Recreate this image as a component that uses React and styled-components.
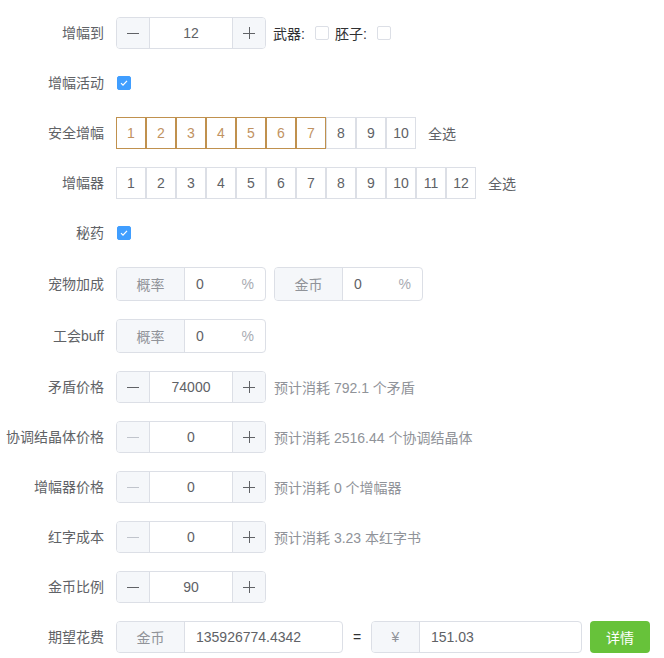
import React from 'react';
import styled, { createGlobalStyle } from 'styled-components';

const GlobalStyle = createGlobalStyle`
  body {
    margin: 0;
    background: #fff;
    font-family: "Liberation Sans", "Noto Sans CJK SC", sans-serif;
    font-size: 14px;
    color: #606266;
  }
`;

const Form = styled.div`
  padding-top: 17px;
  display: flex;
  flex-direction: column;
`;

const Row = styled.div`
  display: flex;
  align-items: center;
  margin-bottom: 18px;
  min-height: ${p => p.h || 32}px;
`;

const Label = styled.div`
  width: 116px;
  flex-shrink: 0;
  box-sizing: border-box;
  padding-right: 12px;
  text-align: right;
  white-space: nowrap;
  color: #606266;
  font-size: 14px;
  line-height: 32px;
`;

const Content = styled.div`
  display: flex;
  align-items: center;
`;

const NumWrap = styled.div`
  display: flex;
  width: 150px;
  height: 32px;
  box-sizing: border-box;
  border: 1px solid #dcdfe6;
  border-radius: 4px;
  overflow: hidden;
`;

const StepBtn = styled.div`
  width: 32px;
  flex-shrink: 0;
  background: #f5f7fa;
  display: flex;
  align-items: center;
  justify-content: center;
  color: ${p => (p.disabled ? '#c0c4cc' : '#606266')};
  border-right: ${p => (p.side === 'left' ? '1px solid #dcdfe6' : 'none')};
  border-left: ${p => (p.side === 'right' ? '1px solid #dcdfe6' : 'none')};
`;

const NumValue = styled.div`
  flex: 1;
  text-align: center;
  line-height: 30px;
  color: #606266;
`;

const Minus = () => (
  <svg width="14" height="14" viewBox="0 0 14 14">
    <path d="M1 7.5h12" stroke="currentColor" strokeWidth="1" />
  </svg>
);

const Plus = () => (
  <svg width="14" height="14" viewBox="0 0 14 14">
    <path d="M1 7.5h12M7.5 1v12" stroke="currentColor" strokeWidth="1" />
  </svg>
);

const NumberInput = ({ value, minDisabled }) => (
  <NumWrap>
    <StepBtn side="left" disabled={minDisabled}><Minus /></StepBtn>
    <NumValue>{value}</NumValue>
    <StepBtn side="right"><Plus /></StepBtn>
  </NumWrap>
);

const Check = styled.span`
  display: inline-flex;
  align-items: center;
  justify-content: center;
  width: 14px;
  height: 14px;
  box-sizing: border-box;
  border-radius: 2px;
  border: 1px solid ${p => (p.checked ? '#409eff' : '#dcdfe6')};
  background: ${p => (p.checked ? '#409eff' : '#fff')};
  margin-left: ${p => p.ml || 0}px;
`;

const Checkbox = ({ checked, ml }) => (
  <Check checked={checked} ml={ml}>
    {checked && (
      <svg width="10" height="10" viewBox="0 0 10 10">
        <path d="M2 5.2l2 2 4-4.4" fill="none" stroke="#fff" strokeWidth="1.2" />
      </svg>
    )}
  </Check>
);

const InlineLabel = styled.span`
  color: #303133;
  margin-left: ${p => p.ml || 0}px;
  margin-right: 10px;
`;

const Boxes = styled.div`
  display: flex;
`;

const NumBox = styled.div`
  width: 30px;
  height: 32px;
  box-sizing: border-box;
  border: 1px solid ${p => (p.on ? '#c0914e' : '#dcdfe6')};
  color: ${p => (p.on ? '#c19261' : '#606266')};
  display: flex;
  align-items: center;
  justify-content: center;
`;

const SelectAll = styled.span`
  margin-left: 12px;
  color: #606266;
`;

const Group = styled.div`
  display: flex;
  width: ${p => p.w}px;
  height: ${p => p.h || 34}px;
  box-sizing: border-box;
  border: 1px solid #dcdfe6;
  border-radius: 4px;
  overflow: hidden;
  margin-left: ${p => p.ml || 0}px;
`;

const Prepend = styled.div`
  width: ${p => p.w}px;
  flex-shrink: 0;
  box-sizing: border-box;
  background: #f5f7fa;
  border-right: 1px solid #dcdfe6;
  color: #909399;
  display: flex;
  align-items: center;
  justify-content: center;
`;

const GroupInput = styled.div`
  flex: 1;
  display: flex;
  align-items: center;
  padding: 0 11px;
  color: #606266;
`;

const Suffix = styled.span`
  margin-left: auto;
  color: #a8abb2;
`;

const Hint = styled.span`
  margin-left: 8px;
  color: #909399;
`;

const Equals = styled.span`
  width: 28px;
  text-align: center;
  color: #303133;
`;

const DetailBtn = styled.button`
  margin-left: 8px;
  width: 60px;
  height: 32px;
  border: none;
  border-radius: 4px;
  background: #67c23a;
  color: #fff;
  font: inherit;
  font-size: 14px;
`;

const safeOn = [1, 2, 3, 4, 5, 6, 7];

export default function App() {
  return (
    <>
      <GlobalStyle />
      <Form>
        <Row>
          <Label>增幅到</Label>
          <Content>
            <NumberInput value="12" />
            <InlineLabel ml={7}>武器:</InlineLabel>
            <Checkbox />
            <InlineLabel ml={6}>胚子:</InlineLabel>
            <Checkbox />
          </Content>
        </Row>

        <Row>
          <Label>增幅活动</Label>
          <Content>
            <Checkbox checked ml={1} />
          </Content>
        </Row>

        <Row>
          <Label>安全增幅</Label>
          <Content>
            <Boxes>
              {Array.from({ length: 10 }, (_, i) => (
                <NumBox key={i} on={safeOn.includes(i + 1)}>{i + 1}</NumBox>
              ))}
            </Boxes>
            <SelectAll>全选</SelectAll>
          </Content>
        </Row>

        <Row>
          <Label>增幅器</Label>
          <Content>
            <Boxes>
              {Array.from({ length: 12 }, (_, i) => (
                <NumBox key={i}>{i + 1}</NumBox>
              ))}
            </Boxes>
            <SelectAll>全选</SelectAll>
          </Content>
        </Row>

        <Row>
          <Label>秘药</Label>
          <Content>
            <Checkbox checked ml={1} />
          </Content>
        </Row>

        <Row h={34}>
          <Label>宠物加成</Label>
          <Content>
            <Group w={150}>
              <Prepend w={68}>概率</Prepend>
              <GroupInput>0<Suffix>%</Suffix></GroupInput>
            </Group>
            <Group w={149} ml={8}>
              <Prepend w={68}>金币</Prepend>
              <GroupInput>0<Suffix>%</Suffix></GroupInput>
            </Group>
          </Content>
        </Row>

        <Row h={34}>
          <Label>工会buff</Label>
          <Content>
            <Group w={150}>
              <Prepend w={68}>概率</Prepend>
              <GroupInput>0<Suffix>%</Suffix></GroupInput>
            </Group>
          </Content>
        </Row>

        <Row>
          <Label>矛盾价格</Label>
          <Content>
            <NumberInput value="74000" />
            <Hint>预计消耗 792.1 个矛盾</Hint>
          </Content>
        </Row>

        <Row>
          <Label>协调结晶体价格</Label>
          <Content>
            <NumberInput value="0" minDisabled />
            <Hint>预计消耗 2516.44 个协调结晶体</Hint>
          </Content>
        </Row>

        <Row>
          <Label>增幅器价格</Label>
          <Content>
            <NumberInput value="0" minDisabled />
            <Hint>预计消耗 0 个增幅器</Hint>
          </Content>
        </Row>

        <Row>
          <Label>红字成本</Label>
          <Content>
            <NumberInput value="0" minDisabled />
            <Hint>预计消耗 3.23 本红字书</Hint>
          </Content>
        </Row>

        <Row>
          <Label>金币比例</Label>
          <Content>
            <NumberInput value="90" />
          </Content>
        </Row>

        <Row>
          <Label>期望花费</Label>
          <Content>
            <Group w={227} h={32}>
              <Prepend w={68}>金币</Prepend>
              <GroupInput>135926774.4342</GroupInput>
            </Group>
            <Equals>=</Equals>
            <Group w={211} h={32}>
              <Prepend w={48}>¥</Prepend>
              <GroupInput>151.03</GroupInput>
            </Group>
            <DetailBtn>详情</DetailBtn>
          </Content>
        </Row>
      </Form>
    </>
  );
}
